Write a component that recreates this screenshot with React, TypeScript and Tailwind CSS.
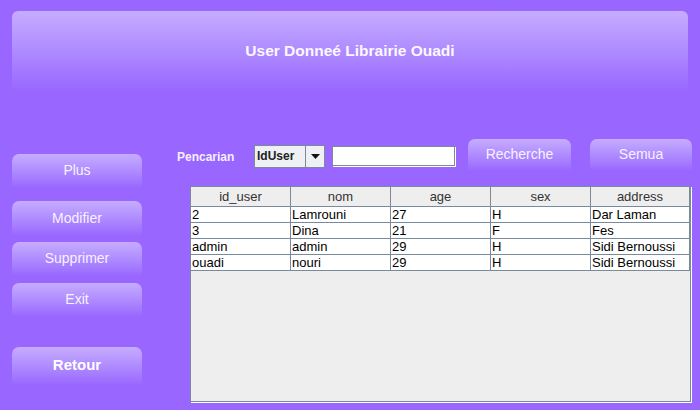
const columns = ["id_user", "nom", "age", "sex", "address"];

const rows = [
  ["2", "Lamrouni", "27", "H", "Dar Laman"],
  ["3", "Dina", "21", "F", "Fes"],
  ["admin", "admin", "29", "H", "Sidi Bernoussi"],
  ["ouadi", "nouri", "29", "H", "Sidi Bernoussi"],
];

const font = "font-['Liberation_Sans',Arial,sans-serif]";

function PurpleButton({
  label,
  className,
  bold,
}: {
  label: string;
  className: string;
  bold?: boolean;
}) {
  return (
    <button
      type="button"
      className={`flex items-center justify-center rounded-t-[7px] rounded-b-[3px] bg-gradient-to-b from-[#c6acff] to-[#9b69ff] ${
        bold ? "text-[15px] font-bold text-white" : "text-[14px] text-[#f6f2ff]"
      } ${className}`}
    >
      {label}
    </button>
  );
}

export default function App() {
  return (
    <div className={`flex h-[410px] w-[700px] flex-col overflow-hidden bg-[#9966ff] ${font}`}>
      <div className="mx-[12px] mt-[11px] flex h-[80px] items-center justify-center rounded-t-[6px] bg-gradient-to-b from-[#c6acff] to-[#9966ff]">
        <h1 className="text-[15.5px] font-bold text-[#fbf8ff]">User Donneé Librairie Ouadi</h1>
      </div>

      <div className="flex">
        {/* side buttons */}
        <div className="ml-[12px] flex w-[130px] flex-col">
          <PurpleButton label="Plus" className="mt-[63px] h-[33px]" />
          <PurpleButton label="Modifier" className="mt-[14px] h-[34px]" />
          <PurpleButton label="Supprimer" className="mt-[7px] h-[33px]" />
          <PurpleButton label="Exit" className="mt-[8px] h-[33px]" />
          <PurpleButton label="Retour" bold className="mt-[31px] h-[37px]" />
        </div>

        <div className="ml-[35px] flex flex-col">
          {/* search row */}
          <div className="mt-[48px] flex items-start">
            <span className="mt-[11px] w-[77px] text-[12px] font-bold leading-[14px] text-[#f4efff]">
              Pencarian
            </span>
            <div className="mt-[6px] flex h-[23px] w-[71px] border border-[#7a8a99] bg-[#eef0f4]">
              <span className="flex-1 pl-[2px] text-[12px] font-bold leading-[21px] text-[#222]">IdUser</span>
              <span className="flex w-[19px] items-center justify-center border-l border-[#7a8a99]">
                <svg width="9" height="5" viewBox="0 0 9 5">
                  <path d="M0 0h9L4.5 5z" fill="#111" />
                </svg>
              </span>
            </div>
            <div className="ml-[7px] mt-[7px] h-[20px] w-[123px] border border-[#7a8a99] bg-white shadow-[1px_1px_0_#fff]" />
            <PurpleButton label="Recherche" className="ml-[13px] h-[31px] w-[103px]" />
            <PurpleButton label="Semua" className="ml-[19px] h-[31px] w-[102px]" />
          </div>

          {/* table */}
          <div className="ml-[13px] mt-[16px] flex h-[216px] w-[501px] flex-col border border-[#7a8a99] bg-[#eeeeee] shadow-[1px_1px_0_#fff]">
            <div className="grid grid-cols-[100px_100px_100px_100px_1fr] border-b border-[#7a8a99] bg-[#eeeeee]">
              {columns.map((c) => (
                <div
                  key={c}
                  className="h-[19px] border-r border-[#7a8a99] text-center text-[13px] leading-[19px] text-[#333]"
                >
                  {c}
                </div>
              ))}
            </div>
            {rows.map((r, i) => (
              <div key={i} className="grid grid-cols-[100px_100px_100px_100px_1fr] border-b border-[#7a8a99] bg-white">
                {r.map((v, j) => (
                  <div
                    key={j}
                    className="h-[15px] border-r border-[#7a8a99] pl-[1px] text-[13px] leading-[15px] text-black"
                  >
                    {v}
                  </div>
                ))}
              </div>
            ))}
          </div>
        </div>
      </div>
    </div>
  );
}
